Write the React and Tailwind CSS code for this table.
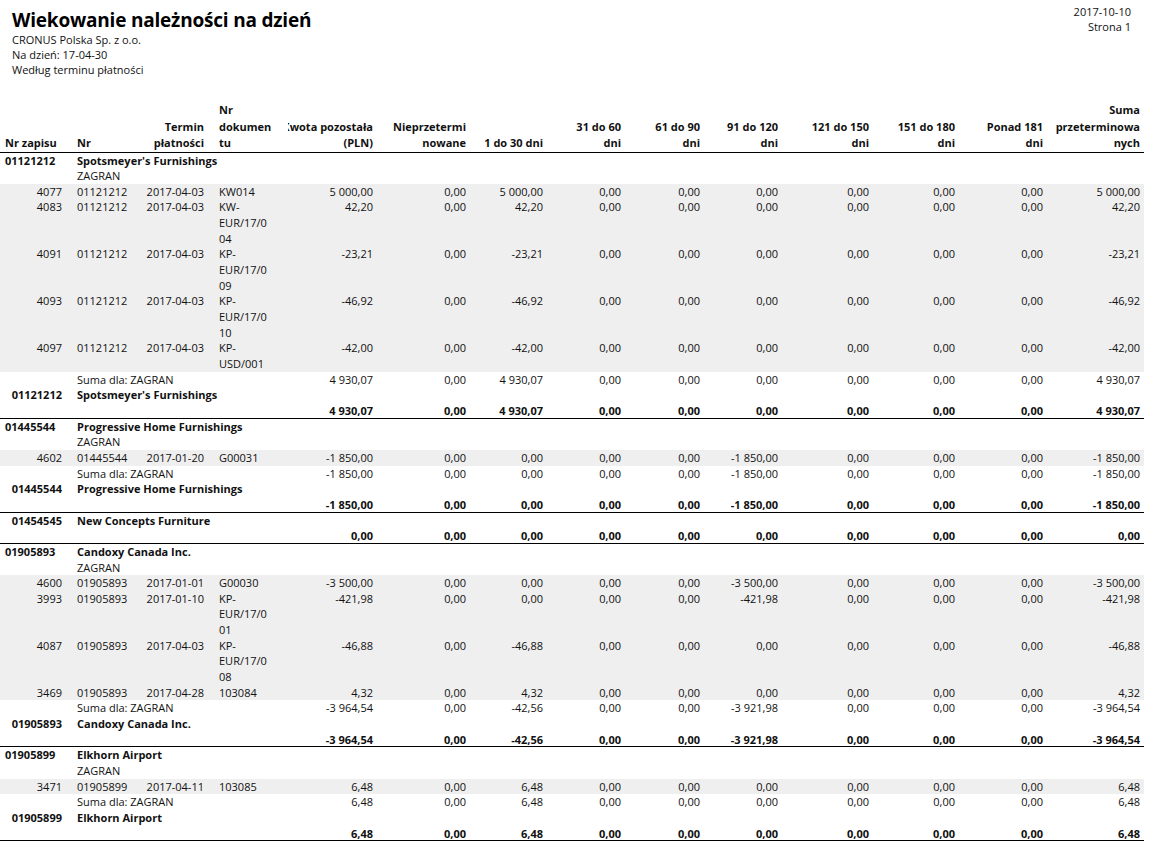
import React from 'react';

const COLS =
  'grid grid-cols-[66px_74px_68px_74px_95px_93px_77px_78px_79px_78px_91px_86px_88px_97px] w-[1144px]';

const Z = '0,00';

const groups = [
  {
    id: '01121212',
    name: "Spotsmeyer's Furnishings",
    headRight: false,
    zagran: true,
    rows: [
      ['4077', '2017-04-03', ['KW014'], ['5 000,00', Z, '5 000,00', Z, Z, Z, Z, Z, Z, '5 000,00']],
      ['4083', '2017-04-03', ['KW-', 'EUR/17/0', '04'], ['42,20', Z, '42,20', Z, Z, Z, Z, Z, Z, '42,20']],
      ['4091', '2017-04-03', ['KP-', 'EUR/17/0', '09'], ['-23,21', Z, '-23,21', Z, Z, Z, Z, Z, Z, '-23,21']],
      ['4093', '2017-04-03', ['KP-', 'EUR/17/0', '10'], ['-46,92', Z, '-46,92', Z, Z, Z, Z, Z, Z, '-46,92']],
      ['4097', '2017-04-03', ['KP-', 'USD/001'], ['-42,00', Z, '-42,00', Z, Z, Z, Z, Z, Z, '-42,00']],
    ],
    sum: ['4 930,07', Z, '4 930,07', Z, Z, Z, Z, Z, Z, '4 930,07'],
  },
  {
    id: '01445544',
    name: 'Progressive Home Furnishings',
    headRight: false,
    zagran: true,
    rows: [
      ['4602', '2017-01-20', ['G00031'], ['-1 850,00', Z, Z, Z, Z, '-1 850,00', Z, Z, Z, '-1 850,00']],
    ],
    sum: ['-1 850,00', Z, Z, Z, Z, '-1 850,00', Z, Z, Z, '-1 850,00'],
  },
  {
    id: '01454545',
    name: 'New Concepts Furniture',
    headRight: true,
    zagran: false,
    rows: [],
    sum: [Z, Z, Z, Z, Z, Z, Z, Z, Z, Z],
  },
  {
    id: '01905893',
    name: 'Candoxy Canada Inc.',
    headRight: false,
    zagran: true,
    rows: [
      ['4600', '2017-01-01', ['G00030'], ['-3 500,00', Z, Z, Z, Z, '-3 500,00', Z, Z, Z, '-3 500,00']],
      ['3993', '2017-01-10', ['KP-', 'EUR/17/0', '01'], ['-421,98', Z, Z, Z, Z, '-421,98', Z, Z, Z, '-421,98']],
      ['4087', '2017-04-03', ['KP-', 'EUR/17/0', '08'], ['-46,88', Z, '-46,88', Z, Z, Z, Z, Z, Z, '-46,88']],
      ['3469', '2017-04-28', ['103084'], ['4,32', Z, '4,32', Z, Z, Z, Z, Z, Z, '4,32']],
    ],
    sum: ['-3 964,54', Z, '-42,56', Z, Z, '-3 921,98', Z, Z, Z, '-3 964,54'],
  },
  {
    id: '01905899',
    name: 'Elkhorn Airport',
    headRight: false,
    zagran: true,
    rows: [
      ['3471', '2017-04-11', ['103085'], ['6,48', Z, '6,48', Z, Z, Z, Z, Z, Z, '6,48']],
    ],
    sum: ['6,48', Z, '6,48', Z, Z, Z, Z, Z, Z, '6,48'],
  },
];

const headers = [
  { lines: ['Nr zapisu'], align: 'left' },
  { lines: ['Nr'], align: 'left2' },
  { lines: ['Termin', 'płatności'], align: 'right' },
  { lines: ['Nr', 'dokumen', 'tu'], align: 'left2' },
  { lines: ['Kwota pozostała', '(PLN)'], align: 'clip' },
  { lines: ['Nieprzetermi', 'nowane'], align: 'right' },
  { lines: ['1 do 30 dni'], align: 'right' },
  { lines: ['31 do 60', 'dni'], align: 'right' },
  { lines: ['61 do 90', 'dni'], align: 'right' },
  { lines: ['91 do 120', 'dni'], align: 'right' },
  { lines: ['121 do 150', 'dni'], align: 'right' },
  { lines: ['151 do 180', 'dni'], align: 'right' },
  { lines: ['Ponad 181', 'dni'], align: 'right' },
  { lines: ['Suma', 'przeterminowa', 'nych'], align: 'right' },
];

const Num = ({ v }) => <div className="text-right pr-[4px] whitespace-nowrap">{v}</div>;

const HeaderRow = () => (
  <div className={`${COLS} font-bold leading-[16.5px] border-b border-black items-end`}>
    {headers.map((h, i) => (
      <div
        key={i}
        className={
          h.align === 'left'
            ? 'pl-[5px] whitespace-nowrap'
            : h.align === 'left2'
            ? 'pl-[11px] whitespace-nowrap'
            : h.align === 'clip'
            ? 'ml-[6px] overflow-hidden'
            : 'text-right pr-[4px] whitespace-nowrap'
        }
      >
        {h.lines.map((l, j) =>
          h.align === 'clip' ? (
            <div key={j} className="flex justify-end pr-[4px] whitespace-nowrap">
              <span className="shrink-0">{l}</span>
            </div>
          ) : (
            <div key={j}>{l}</div>
          )
        )}
      </div>
    ))}
  </div>
);

const Group = ({ g }) => (
  <div>
    {/* customer header */}
    <div className={`${COLS} font-bold`}>
      <div className={g.headRight ? 'text-right pr-[4px]' : 'pl-[5px]'}>{g.id}</div>
      <div className="col-span-13 pl-[11px] whitespace-nowrap">{g.name}</div>
    </div>
    {g.zagran && (
      <div className={COLS}>
        <div />
        <div className="col-span-13 pl-[11px]">ZAGRAN</div>
      </div>
    )}
    {g.rows.map((r) => (
      <div key={r[0]} className={`${COLS} bg-[#efefef]`}>
        <div className="text-right pr-[4px]">{r[0]}</div>
        <div className="pl-[11px]">{g.id}</div>
        <div className="text-right pr-[4px] whitespace-nowrap">{r[1]}</div>
        <div className="pl-[11px] whitespace-nowrap">
          {r[2].map((l, j) => (
            <div key={j}>{l}</div>
          ))}
        </div>
        {r[3].map((v, j) => (
          <Num key={j} v={v} />
        ))}
      </div>
    ))}
    {g.zagran && (
      <>
        <div className={COLS}>
          <div />
          <div className="col-span-3 pl-[11px] whitespace-nowrap">Suma dla: ZAGRAN</div>
          {g.sum.map((v, j) => (
            <Num key={j} v={v} />
          ))}
        </div>
        <div className={`${COLS} font-bold`}>
          <div className="text-right pr-[4px]">{g.id}</div>
          <div className="col-span-13 pl-[11px] whitespace-nowrap">{g.name}</div>
        </div>
      </>
    )}
    {/* group total */}
    <div className={`${COLS} font-bold h-[15.65px] border-b border-black`}>
      <div className="col-span-4" />
      {g.sum.map((v, j) => (
        <Num key={j} v={v} />
      ))}
    </div>
  </div>
);

export default function App() {
  return (
    <div className="w-[1158px] h-[841px] overflow-hidden bg-white text-[#111] font-['Open_Sans',sans-serif] text-[11px] leading-[15.65px]">
      {/* Report title block */}
      <div className="flex justify-between">
        <div className="pt-[8px] pl-[12px]">
          <h1 className="text-[19px] leading-[24px] font-bold tracking-[-0.2px] text-black">
            Wiekowanie należności na dzień
          </h1>
          <div className="leading-[15px]">
            <div>CRONUS Polska Sp. z o.o.</div>
            <div>Na dzień: 17-04-30</div>
            <div>Według terminu płatności</div>
          </div>
        </div>
        <div className="pt-[3.5px] pr-[27px] text-right leading-[15px]">
          <div>2017-10-10</div>
          <div>Strona 1</div>
        </div>
      </div>

      {/* Table */}
      <div className="mt-[25px]">
        <HeaderRow />
        {groups.map((g) => (
          <Group key={g.id} g={g} />
        ))}
      </div>
    </div>
  );
}
